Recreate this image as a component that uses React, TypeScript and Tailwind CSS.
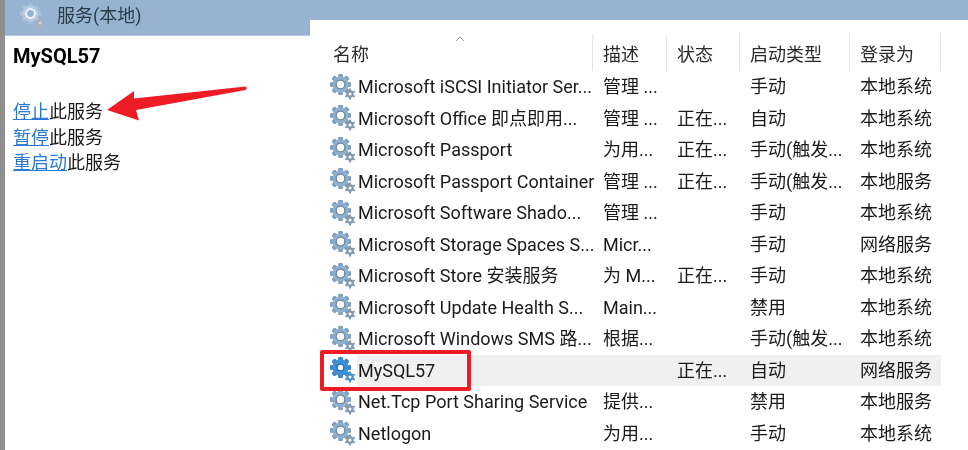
const font = "font-['Roboto','Noto_Sans_CJK_SC',sans-serif]";

function Gear({ active = false, pale = false }: { active?: boolean; pale?: boolean }) {
  const big = active ? "#3f8fd6" : pale ? "#b4cbe2" : "#8fb0cf";
  const dark = active ? "#3a86cc" : pale ? "#a6c0da" : "#7fa0c0";
  const small = active ? "#4a93cf" : pale ? "#a3b2c1" : "#8299ae";
  const teeth = [0, 45, 90, 135, 180, 225, 270, 315];
  const hole = pale ? "#8fb2d6" : "#ffffff";
  const ring = active ? "#2b6eae" : pale ? "#eef5fb" : "#6f86a0";
  return (
    <svg width="28" height="28" viewBox="0 0 28 28" className="shrink-0">
      <g transform="translate(11.5 11.5)">
        {teeth.map((a) => (
          <rect key={a} x="-2.2" y="-10.5" width="4.4" height="21" rx="1" fill={dark} transform={`rotate(${a})`} />
        ))}
        <circle r="8" fill={big} />
        <circle r={active ? 3.4 : 4.4} fill={hole} stroke={ring} strokeWidth={pale ? 2 : 1.4} />
      </g>
      <g transform="translate(21 21)">
        {[0, 60, 120].map((a) => (
          <rect key={a} x="-1" y="-5.5" width="2" height="11" fill={small} transform={`rotate(${a})`} />
        ))}
        <circle r="3.8" fill={small} />
        <circle r="1.5" fill={pale ? "#c8d4df" : "#ffffff"} />
      </g>
    </svg>
  );
}

const rows = [
  ["Microsoft iSCSI Initiator Ser...", "管理 ...", "", "手动", "本地系统"],
  ["Microsoft Office 即点即用...", "管理 ...", "正在...", "自动", "本地系统"],
  ["Microsoft Passport", "为用...", "正在...", "手动(触发...", "本地系统"],
  ["Microsoft Passport Container", "管理 ...", "正在...", "手动(触发...", "本地服务"],
  ["Microsoft Software Shado...", "管理 ...", "", "手动", "本地系统"],
  ["Microsoft Storage Spaces S...", "Micr...", "", "手动", "网络服务"],
  ["Microsoft Store 安装服务", "为 M...", "正在...", "手动", "本地系统"],
  ["Microsoft Update Health S...", "Main...", "", "禁用", "本地系统"],
  ["Microsoft Windows SMS 路...", "根据...", "", "手动(触发...", "本地系统"],
  ["MySQL57", "", "正在...", "自动", "网络服务"],
  ["Net.Tcp Port Sharing Service", "提供...", "", "禁用", "本地服务"],
  ["Netlogon", "为用...", "", "手动", "本地系统"],
];

const cols = "grid grid-cols-[263px_74px_73px_110px_91px]";
const headers = ["名称", "描述", "状态", "启动类型", "登录为"];

export default function App() {
  return (
    <div className={`relative flex w-[968px] h-[450px] overflow-hidden bg-white text-[18px] text-[#1a1a1a] blur-[0.3px] ${font}`}>
      <div className="w-[5px] shrink-0 bg-[#8f8f8f]" />
      <div className="w-[305px] shrink-0 flex flex-col">
        <div className="h-[36px] shrink-0 bg-[#98b3d1] border-b border-[#b8cbe0] flex items-center pl-[14px] gap-[10px] text-[#2b3a4a] pb-[4px]">
          <Gear pale />
          <span>服务(本地)</span>
        </div>
        <div className="pl-[8px] pt-[6px]">
          <div className="font-bold text-[20px] leading-[28px] text-black">MySQL57</div>
          <div className="mt-[29px] leading-[25.5px]">
            <div><span className="text-[#2a7ad2] underline">停止</span>此服务</div>
            <div><span className="text-[#2a7ad2] underline">暂停</span>此服务</div>
            <div><span className="text-[#2a7ad2] underline">重启动</span>此服务</div>
          </div>
        </div>
      </div>
      <div className="flex-1 flex flex-col">
        <div className="h-[20px] shrink-0 bg-[#98b3d1]" />
        <div className="flex-1 bg-white rounded-tl-[12px] -mr-px relative pl-[20px]">
          <div className={`${cols} h-[39px] pt-[14px] relative text-[#2b2b2b]`}>
            {headers.map((h, i) => (
              <div key={h} className={`border-r border-[#e5e5e5] h-[37px] leading-[42px] ${i === 0 ? "pl-[3px]" : "pl-[10px]"}`}>{h}</div>
            ))}
            <svg width="10" height="6" viewBox="0 0 10 6" className="absolute left-[125px] top-[16px]">
              <path d="M1 5 L5 1 L9 5" fill="none" stroke="#a0a0a0" strokeWidth="1" />
            </svg>
          </div>
          <div className="mt-[12px]">
            {rows.map((r) => {
              const active = r[0] === "MySQL57";
              return (
                <div key={r[0]} className={`${cols} h-[31.5px] items-center whitespace-nowrap`}>
                  <div className="flex items-center h-full -ml-px">
                    <Gear active={active} />
                    <span className={active ? "flex-1 h-full flex items-center bg-[#f0f0f0] pl-[1px]" : "pl-[1px]"}>{r[0]}</span>
                  </div>
                  {r.slice(1).map((c, i) => (
                    <div key={i} className={`h-full flex items-center pl-[10px] ${active ? "bg-[#f0f0f0]" : ""}`}>{c}</div>
                  ))}
                </div>
              );
            })}
          </div>
        </div>
      </div>
      <div className="absolute left-[320px] top-[350px] w-[151px] h-[41px] border-[4px] border-[#ee1c25] rounded-[2px]" />
      <svg width="150" height="40" viewBox="0 0 150 40" className="absolute left-[105px] top-[85px]">
        <path d="M140.5 1.5 Q143 3 140.5 5 L31 25 L34 35.5 L2 25 L29 6 L29 13.5 Z" fill="#ee1c25" />
      </svg>
    </div>
  );
}
